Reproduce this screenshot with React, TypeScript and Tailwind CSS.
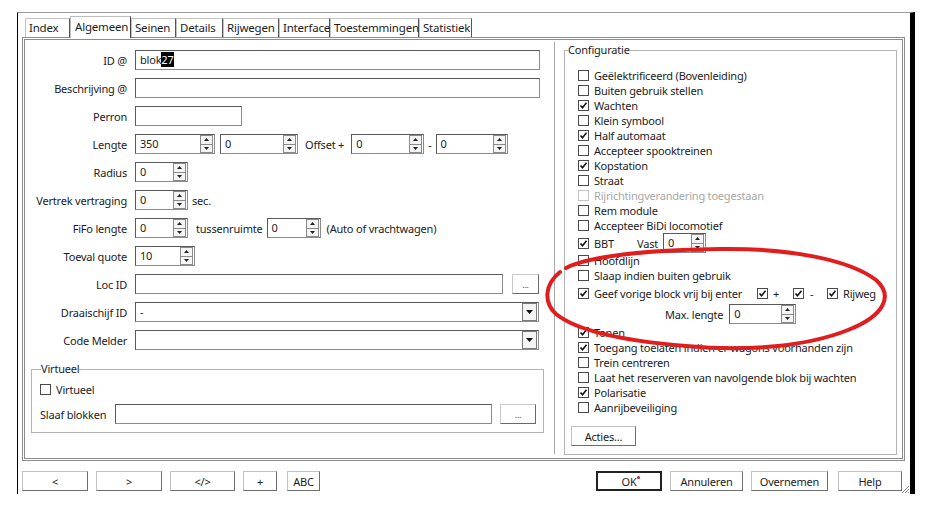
import React from "react"

const tabs: [string, number][] = [
  ["Index", 45],
  ["Algemeen", 61],
  ["Seinen", 45],
  ["Details", 47],
  ["Rijwegen", 56],
  ["Interface", 51],
  ["Toestemmingen", 89],
  ["Statistiek", 53],
]

const sunken =
  "border border-[#8c8c8c] border-t-[#5a5a5a] border-l-[#5a5a5a] bg-white"
const raised =
  "border border-[#c9c9c9] border-r-[#6a6a6a] border-b-[#6a6a6a] bg-white"

const Check = ({ on, dim }: { on?: boolean; dim?: boolean }) => (
  <span
    className={`w-[11px] h-[11px] shrink-0 border bg-white flex items-center justify-center ${
      dim ? "border-[#c4c4c4]" : "border-[#4a4a4a]"
    }`}
  >
    {on && (
      <svg width="9" height="9" viewBox="0 0 9 9">
        <path d="M1.5 4.5 L3.5 6.8 L7.5 1.8" fill="none" stroke="#111" strokeWidth="1.6" />
      </svg>
    )}
  </span>
)

const CheckRow = ({ label, on, dim }: { label: string; on?: boolean; dim?: boolean }) => (
  <div className="h-[15px] flex items-center gap-[5px]">
    <Check on={on} dim={dim} />
    <span className={`whitespace-nowrap ${dim ? "text-[#a8a8a8]" : ""}`}>{label}</span>
  </div>
)

const Arrow = ({ down }: { down?: boolean }) => (
  <svg width="5" height="3" viewBox="0 0 5 3">
    <path d={down ? "M0 0 L5 0 L2.5 3 Z" : "M0 3 L5 3 L2.5 0 Z"} fill="#222" />
  </svg>
)

const Spin = () => (
  <div className="w-[13px] h-[18px] mr-[1px] flex flex-col border border-[#8a8a8a] bg-[#f4f4f4] shrink-0">
    <div className="flex-1 flex items-center justify-center border-b border-[#8a8a8a]">
      <Arrow />
    </div>
    <div className="flex-1 flex items-center justify-center">
      <Arrow down />
    </div>
  </div>
)

const Field = ({ w, value, spin, drop }: { w: number; value?: React.ReactNode; spin?: boolean; drop?: boolean }) => (
  <div className={`h-[20px] flex items-center ${sunken} shrink-0`} style={{ width: w }}>
    <span className="flex-1 pl-[4px] leading-[16px] whitespace-nowrap">{value}</span>
    {spin && <Spin />}
    {drop && (
      <div className="w-[15px] h-[18px] mr-[1px] flex items-center justify-center border border-[#7a7a7a] bg-[#f4f4f4]">
        <svg width="7" height="4" viewBox="0 0 7 4">
          <path d="M0 0 L7 0 L3.5 4 Z" fill="#111" />
        </svg>
      </div>
    )}
  </div>
)

const Row = ({ label, children }: { label: string; children: React.ReactNode }) => (
  <div className="h-[20px] flex items-center">
    <span className="w-[102px] text-right whitespace-nowrap">{label}</span>
    <div className="ml-[8px] flex items-center">{children}</div>
  </div>
)

const Dots = ({ w }: { w: number }) => (
  <div className={`h-[20px] flex items-center justify-center text-[9px] text-[#444] ${raised}`} style={{ width: w }}>
    ...
  </div>
)

const Btn = ({ w, children, def, cls = "" }: { w: number; children: React.ReactNode; def?: boolean; cls?: string }) => (
  <div
    className={`h-[20px] flex items-center justify-center bg-white shrink-0 ${cls} ${
      def ? "border-2 border-[#222]" : "border border-[#c2c2c2] border-r-[#6e6e6e] border-b-[#6e6e6e]"
    }`}
    style={{ width: w }}
  >
    {children}
  </div>
)

export default function App() {
  return (
    <div className="relative w-[931px] h-[511px] bg-white pt-[12px] pl-[17px] text-[11px] leading-none text-[#1c1c1c] font-['Noto_Sans',sans-serif] tracking-[-0.2px] overflow-hidden">
      <div className="relative w-[898px] h-[482px] border-l border-l-black border-t border-t-[#9c9c9c] border-r-[5px] border-r-black flex flex-col">
        {/* tabs */}
        <div className="pl-[7px] h-[24px] flex items-end">
          {tabs.map(([t, w]) =>
            t === "Algemeen" ? (
              <div
                key={t}
                className="h-[22px] -mb-[1px] z-10 bg-white border-t border-l border-r border-t-[#bdbdbd] border-l-[#bdbdbd] border-r-[#444] pl-[4px] pt-[4px] text-[11.5px] whitespace-nowrap"
                style={{ width: w }}
              >
                {t}
              </div>
            ) : (
              <div
                key={t}
                className="h-[19px] border-t border-l border-r border-t-[#c4c4c4] border-l-[#c4c4c4] border-r-[#555] pl-[3px] pt-[3px] text-[11.5px] whitespace-nowrap"
                style={{ width: w }}
              >
                {t}
              </div>
            )
          )}
        </div>

        {/* panel */}
        <div className="ml-[4px] w-[883px] h-[424px] border-[3px] border-double border-[#8c8c8c] flex">
          {/* left column */}
          <div className="w-[529px] pt-[10px]">
            <div className="flex flex-col gap-[8px]">
              <Row label="ID @">
                <Field
                  w={405}
                  value={
                    <>
                      blok<span className="bg-black text-white">27</span>
                    </>
                  }
                />
              </Row>
              <Row label="Beschrijving @">
                <Field w={405} />
              </Row>
              <Row label="Perron">
                <Field w={107} />
              </Row>
              <Row label="Lengte">
                <Field w={80} value="350" spin />
                <span className="ml-[5px]" />
                <Field w={78} value="0" spin />
                <span className="ml-[7px] mr-[7px] whitespace-nowrap">Offset +</span>
                <Field w={73} value="0" spin />
                <span className="mx-[4px]">-</span>
                <Field w={72} value="0" spin />
              </Row>
              <Row label="Radius">
                <Field w={53} value="0" spin />
              </Row>
              <Row label="Vertrek vertraging">
                <Field w={53} value="0" spin />
                <span className="ml-[4px]">sec.</span>
              </Row>
              <Row label="FiFo lengte">
                <Field w={53} value="0" spin />
                <span className="ml-[8px] mr-[4px]">tussenruimte</span>
                <Field w={54} value="0" spin />
                <span className="ml-[6px] whitespace-nowrap">(Auto of vrachtwagen)</span>
              </Row>
              <Row label="Toeval quote">
                <Field w={60} value="10" spin />
              </Row>
              <Row label="Loc ID">
                <Field w={368} />
                <span className="ml-[9px]" />
                <Dots w={27} />
              </Row>
              <Row label="Draaischijf ID">
                <Field w={404} value="-" drop />
              </Row>
              <Row label="Code Melder">
                <Field w={404} drop />
              </Row>
            </div>

            <fieldset className="ml-[6px] mt-[11px] w-[513px] border border-[#b4b4b4] pl-[8px] pt-[5px] pb-[8px]">
              <legend className="ml-[1px] h-[16px] leading-[16px]">Virtueel</legend>
              <CheckRow label="Virtueel" />
              <div className="mt-[7px] h-[20px] flex items-center">
                <span className="w-[75px] whitespace-nowrap">Slaaf blokken</span>
                <Field w={377} />
                <span className="ml-[8px]" />
                <Dots w={36} />
              </div>
            </fieldset>
          </div>

          {/* divider */}
          <div className="w-px mt-[2px] h-[412px] bg-[#a8a8a8]" />

          {/* right column */}
          <div className="pl-[9px] pt-[2px]">
            <fieldset className="w-[333px] border border-[#b4b4b4] pb-[8px] pt-[10px]">
              <legend className="ml-[3px] h-[16px] leading-[16px]">Configuratie</legend>
              <div className="pl-[13px]">
                <CheckRow label="Geëlektrificeerd (Bovenleiding)" />
                <CheckRow label="Buiten gebruik stellen" />
                <CheckRow label="Wachten" on />
                <CheckRow label="Klein symbool" />
                <CheckRow label="Half automaat" on />
                <CheckRow label="Accepteer spooktreinen" />
                <CheckRow label="Kopstation" on />
                <CheckRow label="Straat" />
                <CheckRow label="Rijrichtingverandering toegestaan" dim />
                <CheckRow label="Rem module" />
                <CheckRow label="Accepteer BiDi locomotief" />
                <div className="h-[20px] flex items-center">
                  <Check on />
                  <span className="ml-[5px] w-[20px]">BBT</span>
                  <span className="ml-[23px] mr-[5px]">Vast</span>
                  <Field w={43} value="0" spin />
                </div>
                <CheckRow label="Hoofdlijn" />
                <CheckRow label="Slaap indien buiten gebruik" />
                <div className="h-[20px] flex items-center">
                  <Check on />
                  <span className="ml-[5px] w-[163px] whitespace-nowrap">Geef vorige block vrij bij enter</span>
                  <Check on />
                  <span className="ml-[5px] w-[20px]">+</span>
                  <Check on />
                  <span className="ml-[6px] w-[17px]">-</span>
                  <Check on />
                  <span className="ml-[5px]">Rijweg</span>
                </div>
                <div className="h-[22px] flex items-center">
                  <span className="ml-[87px] mr-[6px] whitespace-nowrap">Max. lengte</span>
                  <Field w={67} value="0" spin />
                </div>
                <CheckRow label="Tonen" on />
                <CheckRow label="Toegang toelaten indien er wagons voorhanden zijn" on />
                <CheckRow label="Trein centreren" />
                <CheckRow label="Laat het reserveren van navolgende blok bij wachten" />
                <CheckRow label="Polarisatie" on />
                <CheckRow label="Aanrijbeveiliging" />
              </div>
              <div className="pl-[6px] mt-[11px]">
                <Btn w={65}>Acties...</Btn>
              </div>
            </fieldset>
          </div>
        </div>

        {/* bottom buttons */}
        <div className="mt-[10px] pl-[4px] pr-[8px] flex justify-between">
          <div className="flex">
            <Btn w={66}>&lt;</Btn>
            <Btn w={66} cls="ml-[8px]">&gt;</Btn>
            <Btn w={65} cls="ml-[8px]">&lt;/&gt;</Btn>
            <Btn w={34} cls="ml-[8px]">+</Btn>
            <Btn w={33} cls="ml-[10px]">ABC</Btn>
          </div>
          <div className="flex">
            <Btn w={66} def>
              <span className="relative">
                OK
                <span className="absolute -right-[3px] top-[0px] w-[3px] h-[3px] rounded-full bg-[#d4141c]" />
              </span>
            </Btn>
            <Btn w={73} cls="ml-[8px]">Annuleren</Btn>
            <Btn w={77} cls="ml-[8px]">Overnemen</Btn>
            <Btn w={64} cls="ml-[10px]">Help</Btn>
          </div>
        </div>

        {/* resize grip */}
        <svg className="absolute right-0 bottom-0" width="10" height="10" viewBox="0 0 10 10">
          <path d="M9 2 L2 9 M9 5 L5 9 M9 8 L8 9" stroke="#888" strokeWidth="1" />
        </svg>
      </div>

      {/* red hand-drawn annotation */}
      <svg className="absolute inset-0 pointer-events-none" width="931" height="511" viewBox="0 0 931 511">
        <path
          d="M566 268 C590 256 650 250 720 249 C790 248 850 260 876 280 C894 296 884 316 848 330 C808 346 748 352 686 346 C626 341 578 332 556 314 C543 302 545 284 560 272"
          fill="none"
          stroke="#e11d1d"
          strokeWidth="4"
          strokeLinecap="round"
        />
      </svg>
    </div>
  )
}
